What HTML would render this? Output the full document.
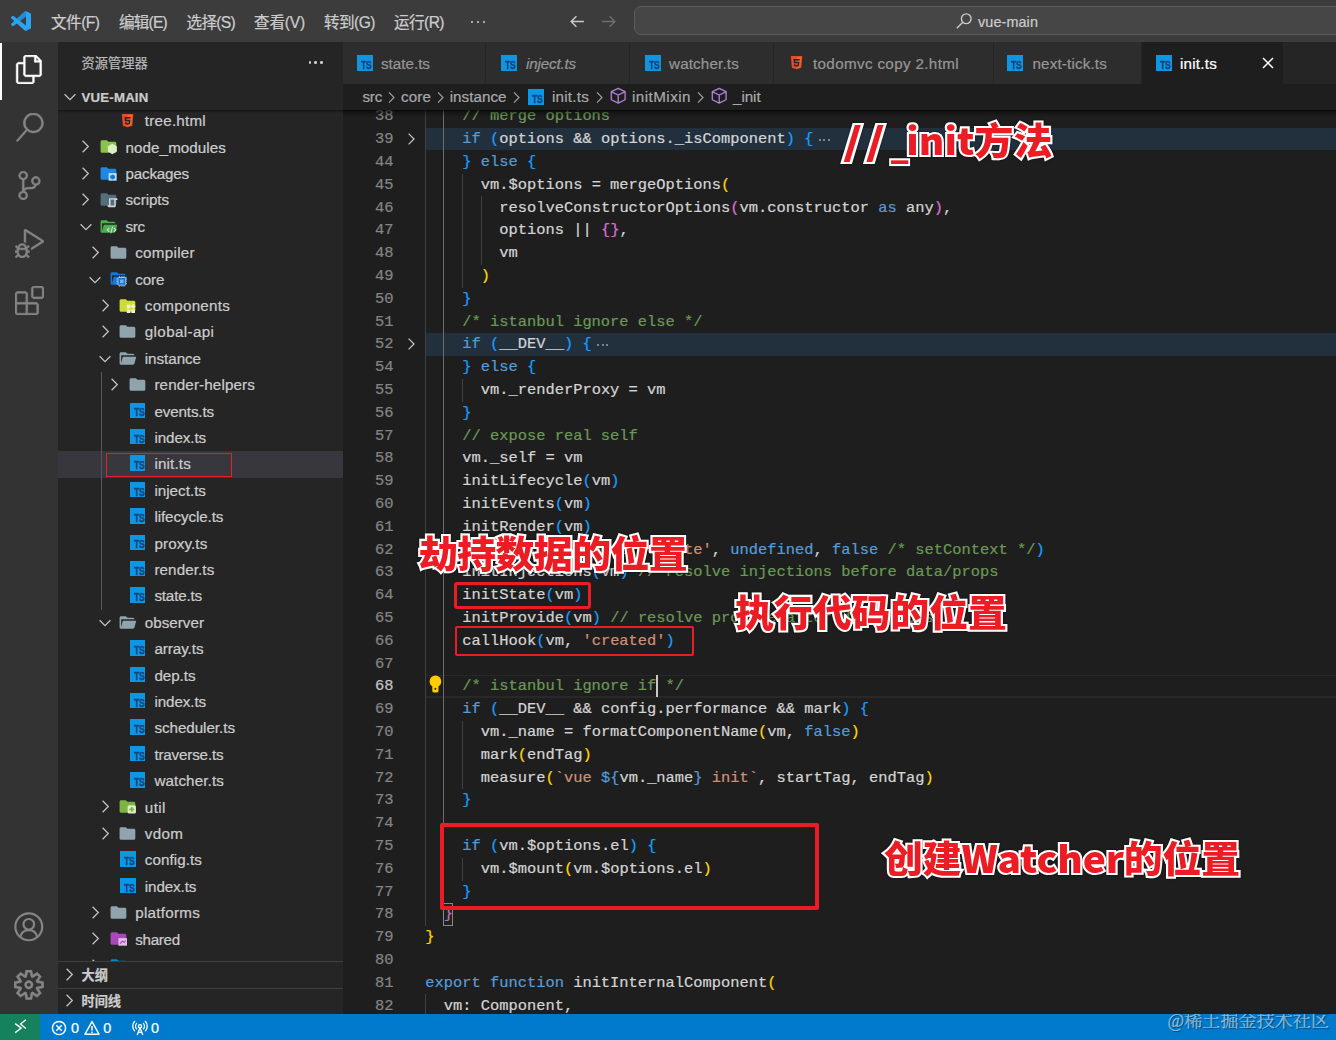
<!DOCTYPE html>
<html lang="zh-CN"><head><meta charset="utf-8"><title>init.ts - vue-main</title>
<style>
*{box-sizing:border-box;margin:0;padding:0}
html,body{width:1336px;height:1040px;overflow:hidden;background:#1e1e1e}
body{position:relative;font-family:"Liberation Sans","Noto Sans CJK SC",sans-serif;color:#cccccc;-webkit-font-smoothing:antialiased}
.abs{position:absolute}
#title{left:0;top:0;width:1336px;height:42px;background:#3c3c3c}
#act{left:0;top:42px;width:58px;height:971.8px;background:#333333}
#side{left:58px;top:42px;width:285px;height:971.8px;background:#252526;overflow:hidden}
#tabs{left:343px;top:42px;width:993px;height:42px;background:#252526}
#crumbs{left:343px;top:84px;width:993px;height:26px;background:#1e1e1e}
#editor{left:343px;top:110px;width:993px;height:903.8px;background:#1e1e1e;overflow:hidden}
#status{left:0;top:1013.8px;width:1336px;height:26.2px;background:#007acc}
.t{position:absolute;white-space:pre;line-height:1;-webkit-text-stroke:0.22px}
.menu{color:#cccccc;font-size:15.6px}
</style></head>
<body>
<!-- part_frame -->
<div id="title" class="abs"></div>
<svg class="abs" style="left:10.5px;top:11px;" width="20" height="20" viewBox="0 0 24 24"><path fill="#2aa4f0" d="M23.15 2.587L18.21.21a1.494 1.494 0 0 0-1.705.29l-9.46 8.63-4.12-3.128a.999.999 0 0 0-1.276.057L.327 7.261A1 1 0 0 0 .326 8.74L3.899 12 .326 15.26a1 1 0 0 0 .001 1.479L1.65 17.94a.999.999 0 0 0 1.276.057l4.12-3.128 9.46 8.63a1.492 1.492 0 0 0 1.704.29l4.942-2.377A1.5 1.5 0 0 0 24 20.06V3.939a1.5 1.5 0 0 0-.85-1.352zm-5.146 14.861L10.826 12l7.178-5.448v10.896z"/><path fill="#1579c4" d="M18.004 6.552V.3l-1.5.2-9.46 8.63L10.826 12z" opacity=".55"/></svg>
<span class="t" style="left:51px;top:12.59px;line-height:20px;font-size:15.6px;color:#cccccc;letter-spacing:-0.52px;">文件(F)</span>
<span class="t" style="left:119px;top:12.59px;line-height:20px;font-size:15.6px;color:#cccccc;letter-spacing:-0.8px;">编辑(E)</span>
<span class="t" style="left:186.5px;top:12.59px;line-height:20px;font-size:15.6px;color:#cccccc;letter-spacing:-0.7px;">选择(S)</span>
<span class="t" style="left:254px;top:12.59px;line-height:20px;font-size:15.6px;color:#cccccc;letter-spacing:-0.2px;">查看(V)</span>
<span class="t" style="left:324px;top:12.59px;line-height:20px;font-size:15.6px;color:#cccccc;letter-spacing:-0.54px;">转到(G)</span>
<span class="t" style="left:394px;top:12.59px;line-height:20px;font-size:15.6px;color:#cccccc;letter-spacing:-0.57px;">运行(R)</span>
<div class="abs" style="left:470.5px;top:20.5px;width:2px;height:2px;background:#cccccc;border-radius:1px"></div>
<div class="abs" style="left:476.5px;top:20.5px;width:2px;height:2px;background:#cccccc;border-radius:1px"></div>
<div class="abs" style="left:482.5px;top:20.5px;width:2px;height:2px;background:#cccccc;border-radius:1px"></div>
<svg class="abs" style="left:569px;top:13px;" width="17" height="17" viewBox="0 0 16 16"><path d="M14 8H2.5M7 3L2 8l5 5" fill="none" stroke="#cccccc" stroke-width="1.3"/></svg>
<svg class="abs" style="left:600px;top:13px;" width="17" height="17" viewBox="0 0 16 16"><path d="M2 8h11.5M9 3l5 5-5 5" fill="none" stroke="#6e6e6e" stroke-width="1.3"/></svg>
<div class="abs" style="left:634px;top:6px;width:720px;height:29px;background:#464647;border:1px solid #5c5c5c;border-radius:7px"></div>
<svg class="abs" style="left:955px;top:12px;" width="18" height="18" viewBox="0 0 16 16"><circle cx="10" cy="6" r="4.3" fill="none" stroke="#cccccc" stroke-width="1.2"/><path d="M6.9 9.1L1.6 14.4" stroke="#cccccc" stroke-width="1.2"/></svg>
<span class="t" style="left:978px;top:13.31px;line-height:19px;font-size:14.4px;color:#cccccc;letter-spacing:0.1px;">vue-main</span>
<div id="act" class="abs"></div>
<div class="abs" style="left:0px;top:42.5px;width:2.3px;height:57px;background:#ffffff;"></div>
<svg class="abs" style="left:14.5px;top:55px;" width="29" height="29" viewBox="0 0 24 24"><path fill="#ffffff" stroke="#ffffff" stroke-width=".4" d="M17.5 0h-9L7 1.5V6H2.5L1 7.5v15.07L2.5 24h12.07L16 22.57V18h4.7l1.3-1.43V4.5L17.5 0zm0 2.12l2.38 2.38H17.5V2.12zm-3 20.38h-12v-15H7v9.07L8.5 18h6v4.5zm6-6h-12v-15H16V6h4.5v10.5z"/></svg>
<svg class="abs" style="left:14.5px;top:113px;" width="29" height="29" viewBox="0 0 24 24"><path fill="#858585" stroke="#858585" stroke-width=".45" d="M15.25 0a8.25 8.25 0 0 0-6.18 13.72L1 22.88l1.12 1 8.05-9.12A8.251 8.251 0 1 0 15.25.01V0zm0 15a6.75 6.75 0 1 1 0-13.5 6.75 6.75 0 0 1 0 13.5z"/></svg>
<svg class="abs" style="left:14.5px;top:171px;" width="29" height="29" viewBox="0 0 24 24"><path fill="#858585" stroke="#858585" stroke-width=".45" d="M21.007 8.222A3.738 3.738 0 0 0 15.045 5.2a3.737 3.737 0 0 0 1.156 6.583 2.988 2.988 0 0 1-2.668 1.67h-2.99a4.456 4.456 0 0 0-2.989 1.165V7.4a3.737 3.737 0 1 0-1.494 0v9.117a3.776 3.776 0 1 0 1.816.099 2.99 2.99 0 0 1 2.668-1.667h2.99a4.484 4.484 0 0 0 4.223-3.039 3.736 3.736 0 0 0 3.25-3.687zM4.565 3.738a2.242 2.242 0 1 1 4.484 0 2.242 2.242 0 0 1-4.484 0zm4.484 16.441a2.242 2.242 0 1 1-4.484 0 2.242 2.242 0 0 1 4.484 0zm8.221-9.715a2.242 2.242 0 1 1 0-4.485 2.242 2.242 0 0 1 0 4.485z"/></svg>
<svg class="abs" style="left:14.5px;top:228.5px;" width="29" height="29" viewBox="0 0 24 24"><path fill="#858585" stroke="#858585" stroke-width=".45" d="M10.94 13.5l-1.32 1.32a3.73 3.73 0 0 0-7.24 0L1.06 13.5 0 14.56l1.72 1.72-.22.22V18H0v1.5h1.5v.08c.077.489.214.966.41 1.42L0 22.94 1.06 24l1.65-1.65A4.308 4.308 0 0 0 6 24a4.31 4.31 0 0 0 3.29-1.65L10.94 24 12 22.94 10.09 21c.198-.464.336-.951.41-1.45v-.1H12V18h-1.5v-1.5l-.22-.22L12 14.56l-1.06-1.06zM6 13.5a2.25 2.25 0 0 1 2.25 2.25h-4.5A2.25 2.25 0 0 1 6 13.5zm3 6a3.33 3.33 0 0 1-3 3 3.33 3.33 0 0 1-3-3v-2.25h6v2.25zm14.76-9.9v1.26L13.5 17.37V15.6l8.5-5.37L9 2v9.46a5.07 5.07 0 0 0-1.5-.72V.63L8.64 0l15.12 9.6z"/></svg>
<svg class="abs" style="left:14.5px;top:286px;" width="29" height="29" viewBox="0 0 24 24"><path fill="#858585" stroke="#858585" stroke-width=".45" d="M13.5 1.5L15 0h7.5L24 1.5V9l-1.5 1.5H15L13.5 9V1.5zm1.5 0V9h7.5V1.5H15zM0 15V6l1.5-1.5H9L10.5 6v7.5H18l1.5 1.5v7.5L18 24H1.5L0 22.5V15zm9-1.5V6H1.5v7.5H9zM9 15H1.5v7.5H9V15zm1.5 7.5H18V15h-7.5v7.5z"/></svg>
<svg class="abs" style="left:14.2px;top:912px;" width="29.6" height="29.6" viewBox="0 0 24 24"><circle cx="12" cy="12" r="10.9" fill="none" stroke="#858585" stroke-width="1.75"/><circle cx="12" cy="10" r="4.3" fill="none" stroke="#858585" stroke-width="1.75"/><path d="M5.2 20.2c.7-3.5 3.400-5.500 6.800-5.500s6.100 2 6.800 5.500" fill="none" stroke="#858585" stroke-width="1.75"/></svg>
<svg class="abs" style="left:14.2px;top:970px;" width="29.6" height="29.6" viewBox="0 0 24 24"><path fill="#858585" stroke="#858585" stroke-width=".45" d="M19.85 8.75l4.15.83v4.84l-4.15.83 2.35 3.52-3.43 3.43-3.52-2.35-.83 4.15H9.58l-.83-4.15-3.52 2.35-3.43-3.43 2.35-3.52L0 14.42V9.58l4.15-.83L1.8 5.23 5.23 1.8l3.52 2.35L9.58 0h4.84l.83 4.15 3.52-2.35 3.43 3.43-2.35 3.52zm-1.57 5.07l4-.81v-2l-4-.81-.54-1.3 2.29-3.43-1.43-1.43-3.43 2.29-1.3-.54-.81-4h-2l-.81 4-1.3.54-3.43-2.29-1.43 1.43L6.38 8.9l-.54 1.3-4 .81v2l4 .81.54 1.3-2.29 3.43 1.43 1.43 3.43-2.29 1.3.54.81 4h2l.81-4 1.3-.54 3.43 2.29 1.43-1.43-2.29-3.43.54-1.3zm-8.186-4.672A3.43 3.43 0 0 1 12 8.57 3.44 3.44 0 0 1 15.43 12a3.43 3.43 0 1 1-5.336-2.852zm.956 4.274c.281.188.612.288.95.288A1.7 1.7 0 0 0 13.71 12a1.71 1.71 0 1 0-2.66 1.422z"/></svg>
<div id="status" class="abs"></div>
<div class="abs" style="left:0px;top:1013.8px;width:40.4px;height:26.2px;background:#16825d;"></div>
<svg class="abs" style="left:10px;top:1016px;" width="20" height="20" viewBox="0 0 20 20"><path d="M5.2 7.6l6 4.5-6 4.5M15.8 3.8l-5.2 4.3 5.2 4.3" fill="none" stroke="#ffffff" stroke-width="1.35"/></svg>
<svg class="abs" style="left:51px;top:1019.5px;" width="16" height="16" viewBox="0 0 16 16"><circle cx="8" cy="8" r="6.6" fill="none" stroke="#fff" stroke-width="1.45"/><path d="M5.3 5.3l5.4 5.4M10.7 5.3l-5.4 5.4" stroke="#fff" stroke-width="1.45"/></svg>
<span class="t" style="left:71px;top:1018.51px;line-height:19px;font-size:14.4px;color:#ffffff;letter-spacing:-0.02px;">0</span>
<svg class="abs" style="left:84px;top:1019.5px;" width="16" height="16" viewBox="0 0 16 16"><path d="M8 1.6L15 14.2H1z" fill="none" stroke="#fff" stroke-width="1.45" stroke-linejoin="round"/><path d="M8 6v4.6M8 11.6v1.3" stroke="#fff" stroke-width="1.45"/></svg>
<span class="t" style="left:103.3px;top:1018.51px;line-height:19px;font-size:14.4px;color:#ffffff;letter-spacing:0.18px;">0</span>
<svg class="abs" style="left:131.5px;top:1019.5px;" width="16" height="16" viewBox="0 0 16 16"><circle cx="8" cy="6.2" r="1.6" fill="none" stroke="#fff" stroke-width="1.35"/><path d="M8 7.8L5.2 15M8 7.8L10.8 15M6.2 12.3h3.6" fill="none" stroke="#fff" stroke-width="1.35"/><path d="M4.9 9.3a4.4 4.4 0 0 1 0-6.2M11.1 9.3a4.4 4.4 0 0 0 0-6.2M2.9 11.3a7.2 7.2 0 0 1 0-10.2M13.1 11.3a7.2 7.2 0 0 0 0-10.2" fill="none" stroke="#fff" stroke-width="1.35"/></svg>
<span class="t" style="left:151px;top:1018.51px;line-height:19px;font-size:14.4px;color:#ffffff;letter-spacing:-0.02px;">0</span>
<span class="t" style="left:1167.6px;top:1008.2px;line-height:26px;font-size:18.1px;font-family:&quot;Liberation Serif&quot;,&quot;Noto Serif CJK SC&quot;,serif;color:rgba(255,255,255,.5);text-shadow:1px 1px 1px rgba(0,0,0,.5);letter-spacing:0">@稀土掘金技术社区</span>
<!-- part_side -->
<div id="side" class="abs"></div>
<div class="abs" style="left:58px;top:451.2px;width:285px;height:26.4px;background:#37373d;"></div>
<div class="abs" style="left:101px;top:372px;width:1px;height:237.6px;background:#585858;"></div>
<span class="t" style="left:144.8px;top:111.23px;line-height:20px;font-size:15.2px;color:#cccccc;letter-spacing:0.23px;">tree.html</span>
<svg class="abs" style="left:121.1px;top:113.1px;" width="13.2" height="15.2" viewBox="0 0 16 16"><path d="M1 0h14l-1.3 14.4L8 16l-5.7-1.6z" fill="#e44d26"/><path d="M8 1.2v13.6l4.6-1.3L13.7 1.2z" fill="#f16529"/><path d="M4.3 3.6h7.5l-.2 1.9H6.3l.1 1.6h5l-.5 5L8 13l-2.9-.9-.2-2.2h1.8l.1 1 1.2.3 1.2-.3.2-2H4.7z" fill="#252526"/></svg>
<span class="t" style="left:125.6px;top:137.63px;line-height:20px;font-size:15.2px;color:#cccccc;letter-spacing:0.06px;">node_modules</span>
<svg class="abs" style="left:79.3px;top:139.3px;" width="14" height="15" viewBox="0 0 14 15"><path d="M3.6 1.8l5.7 5.7-5.7 5.7" fill="none" stroke="#c5c5c5" stroke-width="1.25"/></svg>
<svg class="abs" style="left:99px;top:137.35px;" width="18.9" height="18.9" viewBox="0 0 24 24"><path fill="#8bc34a" d="M10 4H4c-1.11 0-2 .89-2 2v12a2 2 0 0 0 2 2h16a2 2 0 0 0 2-2V8c0-1.11-.9-2-2-2h-8l-2-2z"/><path d="M17 8.6l5.7 3.3v6.6L17 21.8l-5.700-3.3v-6.600z" fill="#dcedc8"/></svg>
<span class="t" style="left:125.6px;top:164.03px;line-height:20px;font-size:15.2px;color:#cccccc;letter-spacing:-0.2px;">packages</span>
<svg class="abs" style="left:79.3px;top:165.7px;" width="14" height="15" viewBox="0 0 14 15"><path d="M3.6 1.8l5.7 5.7-5.7 5.7" fill="none" stroke="#c5c5c5" stroke-width="1.25"/></svg>
<svg class="abs" style="left:99px;top:163.75px;" width="18.9" height="18.9" viewBox="0 0 24 24"><path fill="#1e88e5" d="M10 4H4c-1.11 0-2 .89-2 2v12a2 2 0 0 0 2 2h16a2 2 0 0 0 2-2V8c0-1.11-.9-2-2-2h-8l-2-2z"/><path d="M12.2 11.6h10.2v9.6H12.2z" fill="#bbdefb"/><path d="M17.3 13.2l3 1.6v3.2l-3 1.6-3-1.6v-3.2z" fill="#1976d2"/></svg>
<span class="t" style="left:125.6px;top:190.43px;line-height:20px;font-size:15.2px;color:#cccccc;letter-spacing:-0.07px;">scripts</span>
<svg class="abs" style="left:79.3px;top:192.1px;" width="14" height="15" viewBox="0 0 14 15"><path d="M3.6 1.8l5.7 5.7-5.7 5.7" fill="none" stroke="#c5c5c5" stroke-width="1.25"/></svg>
<svg class="abs" style="left:99px;top:190.15px;" width="18.9" height="18.9" viewBox="0 0 24 24"><path fill="#546e7a" d="M10 4H4c-1.11 0-2 .89-2 2v12a2 2 0 0 0 2 2h16a2 2 0 0 0 2-2V8c0-1.11-.9-2-2-2h-8l-2-2z"/><path d="M13.4 10.4h8.8c.9 0 1.2.7 1.2 1.4v.9h-2.2v7.6c0 1-.8 1.6-1.7 1.6h-7.1c-.9 0-1.5-.7-1.5-1.5v-1h1.8v-7.1c0-1 .2-1.9.7-1.9z" fill="#cfd8dc"/><path d="M14.6 12.1h4.8v7.6h-4.8z" fill="#546e7a"/></svg>
<span class="t" style="left:125.6px;top:216.83px;line-height:20px;font-size:15.2px;color:#cccccc;letter-spacing:-0.42px;">src</span>
<svg class="abs" style="left:78.8px;top:219.8px;" width="14" height="14" viewBox="0 0 14 14"><path d="M1.6 4.3L7 9.7l5.4-5.4" fill="none" stroke="#c5c5c5" stroke-width="1.25"/></svg>
<svg class="abs" style="left:99px;top:216.55px;" width="18.9" height="18.9" viewBox="0 0 24 24"><path fill="#4caf50" d="M19 20H4a2 2 0 0 1-2-2V6c0-1.11.89-2 2-2h6l2 2h7a2 2 0 0 1 2 2H4v10l2.14-8h17.07l-2.28 8.5c-.23.87-1.01 1.5-1.93 1.5z"/><path d="M12.7 13.2l-3.2 3.1 3.2 3.1 1-1-2.1-2.1 2.1-2.1zM19.4 13.2l-1 1 2.1 2.1-2.1 2.1 1 1 3.2-3.1zM16.6 12.2l-2.3 8.4h1.4l2.3-8.4z" fill="#c8e6c9"/></svg>
<span class="t" style="left:135.2px;top:243.23px;line-height:20px;font-size:15.2px;color:#cccccc;letter-spacing:0.3px;">compiler</span>
<svg class="abs" style="left:88.9px;top:244.9px;" width="14" height="15" viewBox="0 0 14 15"><path d="M3.6 1.8l5.7 5.7-5.7 5.7" fill="none" stroke="#c5c5c5" stroke-width="1.25"/></svg>
<svg class="abs" style="left:108.6px;top:242.95px;" width="18.9" height="18.9" viewBox="0 0 24 24"><path fill="#90a4ae" d="M10 4H4c-1.11 0-2 .89-2 2v12a2 2 0 0 0 2 2h16a2 2 0 0 0 2-2V8c0-1.11-.9-2-2-2h-8l-2-2z"/></svg>
<span class="t" style="left:135.2px;top:269.63px;line-height:20px;font-size:15.2px;color:#cccccc;letter-spacing:-0.06px;">core</span>
<svg class="abs" style="left:88.4px;top:272.6px;" width="14" height="14" viewBox="0 0 14 14"><path d="M1.6 4.3L7 9.7l5.4-5.4" fill="none" stroke="#c5c5c5" stroke-width="1.25"/></svg>
<svg class="abs" style="left:108.6px;top:269.35px;" width="18.9" height="18.9" viewBox="0 0 24 24"><path fill="#1976d2" d="M19 20H4a2 2 0 0 1-2-2V6c0-1.11.89-2 2-2h6l2 2h7a2 2 0 0 1 2 2H4v10l2.14-8h17.07l-2.28 8.5c-.23.87-1.01 1.5-1.93 1.5z"/><rect x="11.4" y="10.8" width="9.8" height="9.8" rx="1" fill="#1e6fc4" stroke="#a9d2f7" stroke-width="1.1"/><rect x="14" y="13.4" width="4.6" height="4.6" fill="#6db6f5"/><path d="M9.400 12.800h1.400M9.400 15.700h1.400M9.400 18.600h1.400M21.800 12.800h1.400M21.800 15.700h1.400M21.800 18.600h1.400M13.400 8.800v1.400M16.300 8.800v1.400M19.200 8.800v1.400M13.400 21.200v1.400M16.300 21.200v1.400M19.200 21.200v1.400" stroke="#a9d2f7" stroke-width="1"/></svg>
<span class="t" style="left:144.8px;top:296.03px;line-height:20px;font-size:15.2px;color:#cccccc;letter-spacing:0.25px;">components</span>
<svg class="abs" style="left:98.5px;top:297.7px;" width="14" height="15" viewBox="0 0 14 15"><path d="M3.6 1.8l5.7 5.7-5.7 5.7" fill="none" stroke="#c5c5c5" stroke-width="1.25"/></svg>
<svg class="abs" style="left:118.2px;top:295.75px;" width="18.9" height="18.9" viewBox="0 0 24 24"><path fill="#cddc39" d="M10 4H4c-1.11 0-2 .89-2 2v12a2 2 0 0 0 2 2h16a2 2 0 0 0 2-2V8c0-1.11-.9-2-2-2h-8l-2-2z"/><path d="M11.2 11.2h4.6v4.6h-4.6zM11.2 17h4.6v4.6h-4.6zM17 17h4.6v4.6H17zM19.3 9.9l3.2 3.2-3.2 3.2-3.2-3.2z" fill="#f0f4c3"/></svg>
<span class="t" style="left:144.8px;top:322.43px;line-height:20px;font-size:15.2px;color:#cccccc;letter-spacing:0.37px;">global-api</span>
<svg class="abs" style="left:98.5px;top:324.1px;" width="14" height="15" viewBox="0 0 14 15"><path d="M3.6 1.8l5.7 5.7-5.7 5.7" fill="none" stroke="#c5c5c5" stroke-width="1.25"/></svg>
<svg class="abs" style="left:118.2px;top:322.15px;" width="18.9" height="18.9" viewBox="0 0 24 24"><path fill="#90a4ae" d="M10 4H4c-1.11 0-2 .89-2 2v12a2 2 0 0 0 2 2h16a2 2 0 0 0 2-2V8c0-1.11-.9-2-2-2h-8l-2-2z"/></svg>
<span class="t" style="left:144.8px;top:348.83px;line-height:20px;font-size:15.2px;color:#cccccc;letter-spacing:-0.05px;">instance</span>
<svg class="abs" style="left:98px;top:351.8px;" width="14" height="14" viewBox="0 0 14 14"><path d="M1.6 4.3L7 9.7l5.4-5.4" fill="none" stroke="#c5c5c5" stroke-width="1.25"/></svg>
<svg class="abs" style="left:118.2px;top:348.55px;" width="18.9" height="18.9" viewBox="0 0 24 24"><path fill="#90a4ae" d="M19 20H4a2 2 0 0 1-2-2V6c0-1.11.89-2 2-2h6l2 2h7a2 2 0 0 1 2 2H4v10l2.14-8h17.07l-2.28 8.5c-.23.87-1.01 1.5-1.93 1.5z"/></svg>
<span class="t" style="left:154.4px;top:375.23px;line-height:20px;font-size:15.2px;color:#cccccc;letter-spacing:0.13px;">render-helpers</span>
<svg class="abs" style="left:108.1px;top:376.9px;" width="14" height="15" viewBox="0 0 14 15"><path d="M3.6 1.8l5.7 5.7-5.7 5.7" fill="none" stroke="#c5c5c5" stroke-width="1.25"/></svg>
<svg class="abs" style="left:127.8px;top:374.95px;" width="18.9" height="18.9" viewBox="0 0 24 24"><path fill="#90a4ae" d="M10 4H4c-1.11 0-2 .89-2 2v12a2 2 0 0 0 2 2h16a2 2 0 0 0 2-2V8c0-1.11-.9-2-2-2h-8l-2-2z"/></svg>
<span class="t" style="left:154.4px;top:401.63px;line-height:20px;font-size:15.2px;color:#cccccc;letter-spacing:-0.13px;">events.ts</span>
<div class="abs" style="left:129.8px;top:402.5px;width:15.6px;height:15.6px;background:#0c96e4"></div><span class="t" style="left:131.8px;top:408.4px;font-size:10.2px;line-height:10px;font-weight:700;color:#15467f;letter-spacing:-0.2px;transform-origin:100% 100%;transform:scaleX(.84);-webkit-text-stroke:.4px">TS</span>
<span class="t" style="left:154.4px;top:428.03px;line-height:20px;font-size:15.2px;color:#cccccc;letter-spacing:-0.09px;">index.ts</span>
<div class="abs" style="left:129.8px;top:428.9px;width:15.6px;height:15.6px;background:#0c96e4"></div><span class="t" style="left:131.8px;top:434.8px;font-size:10.2px;line-height:10px;font-weight:700;color:#15467f;letter-spacing:-0.2px;transform-origin:100% 100%;transform:scaleX(.84);-webkit-text-stroke:.4px">TS</span>
<span class="t" style="left:154.4px;top:454.43px;line-height:20px;font-size:15.2px;color:#cccccc;letter-spacing:0.16px;">init.ts</span>
<div class="abs" style="left:129.8px;top:455.3px;width:15.6px;height:15.6px;background:#0c96e4"></div><span class="t" style="left:131.8px;top:461.2px;font-size:10.2px;line-height:10px;font-weight:700;color:#15467f;letter-spacing:-0.2px;transform-origin:100% 100%;transform:scaleX(.84);-webkit-text-stroke:.4px">TS</span>
<span class="t" style="left:154.4px;top:480.83px;line-height:20px;font-size:15.2px;color:#cccccc;letter-spacing:0.01px;">inject.ts</span>
<div class="abs" style="left:129.8px;top:481.7px;width:15.6px;height:15.6px;background:#0c96e4"></div><span class="t" style="left:131.8px;top:487.6px;font-size:10.2px;line-height:10px;font-weight:700;color:#15467f;letter-spacing:-0.2px;transform-origin:100% 100%;transform:scaleX(.84);-webkit-text-stroke:.4px">TS</span>
<span class="t" style="left:154.4px;top:507.23px;line-height:20px;font-size:15.2px;color:#cccccc;letter-spacing:-0.09px;">lifecycle.ts</span>
<div class="abs" style="left:129.8px;top:508.1px;width:15.6px;height:15.6px;background:#0c96e4"></div><span class="t" style="left:131.8px;top:514px;font-size:10.2px;line-height:10px;font-weight:700;color:#15467f;letter-spacing:-0.2px;transform-origin:100% 100%;transform:scaleX(.84);-webkit-text-stroke:.4px">TS</span>
<span class="t" style="left:154.4px;top:533.63px;line-height:20px;font-size:15.2px;color:#cccccc;letter-spacing:0.12px;">proxy.ts</span>
<div class="abs" style="left:129.8px;top:534.5px;width:15.6px;height:15.6px;background:#0c96e4"></div><span class="t" style="left:131.8px;top:540.4px;font-size:10.2px;line-height:10px;font-weight:700;color:#15467f;letter-spacing:-0.2px;transform-origin:100% 100%;transform:scaleX(.84);-webkit-text-stroke:.4px">TS</span>
<span class="t" style="left:154.4px;top:560.03px;line-height:20px;font-size:15.2px;color:#cccccc;letter-spacing:0.1px;">render.ts</span>
<div class="abs" style="left:129.8px;top:560.9px;width:15.6px;height:15.6px;background:#0c96e4"></div><span class="t" style="left:131.8px;top:566.8px;font-size:10.2px;line-height:10px;font-weight:700;color:#15467f;letter-spacing:-0.2px;transform-origin:100% 100%;transform:scaleX(.84);-webkit-text-stroke:.4px">TS</span>
<span class="t" style="left:154.4px;top:586.43px;line-height:20px;font-size:15.2px;color:#cccccc;letter-spacing:-0.17px;">state.ts</span>
<div class="abs" style="left:129.8px;top:587.3px;width:15.6px;height:15.6px;background:#0c96e4"></div><span class="t" style="left:131.8px;top:593.2px;font-size:10.2px;line-height:10px;font-weight:700;color:#15467f;letter-spacing:-0.2px;transform-origin:100% 100%;transform:scaleX(.84);-webkit-text-stroke:.4px">TS</span>
<span class="t" style="left:144.8px;top:612.83px;line-height:20px;font-size:15.2px;color:#cccccc;letter-spacing:0.01px;">observer</span>
<svg class="abs" style="left:98px;top:615.8px;" width="14" height="14" viewBox="0 0 14 14"><path d="M1.6 4.3L7 9.7l5.4-5.4" fill="none" stroke="#c5c5c5" stroke-width="1.25"/></svg>
<svg class="abs" style="left:118.2px;top:612.55px;" width="18.9" height="18.9" viewBox="0 0 24 24"><path fill="#90a4ae" d="M19 20H4a2 2 0 0 1-2-2V6c0-1.11.89-2 2-2h6l2 2h7a2 2 0 0 1 2 2H4v10l2.14-8h17.07l-2.28 8.5c-.23.87-1.01 1.5-1.93 1.5z"/></svg>
<span class="t" style="left:154.4px;top:639.23px;line-height:20px;font-size:15.2px;color:#cccccc;letter-spacing:-0.05px;">array.ts</span>
<div class="abs" style="left:129.8px;top:640.1px;width:15.6px;height:15.6px;background:#0c96e4"></div><span class="t" style="left:131.8px;top:646px;font-size:10.2px;line-height:10px;font-weight:700;color:#15467f;letter-spacing:-0.2px;transform-origin:100% 100%;transform:scaleX(.84);-webkit-text-stroke:.4px">TS</span>
<span class="t" style="left:154.4px;top:665.63px;line-height:20px;font-size:15.2px;color:#cccccc;letter-spacing:-0.05px;">dep.ts</span>
<div class="abs" style="left:129.8px;top:666.5px;width:15.6px;height:15.6px;background:#0c96e4"></div><span class="t" style="left:131.8px;top:672.4px;font-size:10.2px;line-height:10px;font-weight:700;color:#15467f;letter-spacing:-0.2px;transform-origin:100% 100%;transform:scaleX(.84);-webkit-text-stroke:.4px">TS</span>
<span class="t" style="left:154.4px;top:692.03px;line-height:20px;font-size:15.2px;color:#cccccc;letter-spacing:-0.09px;">index.ts</span>
<div class="abs" style="left:129.8px;top:692.9px;width:15.6px;height:15.6px;background:#0c96e4"></div><span class="t" style="left:131.8px;top:698.8px;font-size:10.2px;line-height:10px;font-weight:700;color:#15467f;letter-spacing:-0.2px;transform-origin:100% 100%;transform:scaleX(.84);-webkit-text-stroke:.4px">TS</span>
<span class="t" style="left:154.4px;top:718.43px;line-height:20px;font-size:15.2px;color:#cccccc;letter-spacing:-0.04px;">scheduler.ts</span>
<div class="abs" style="left:129.8px;top:719.3px;width:15.6px;height:15.6px;background:#0c96e4"></div><span class="t" style="left:131.8px;top:725.2px;font-size:10.2px;line-height:10px;font-weight:700;color:#15467f;letter-spacing:-0.2px;transform-origin:100% 100%;transform:scaleX(.84);-webkit-text-stroke:.4px">TS</span>
<span class="t" style="left:154.4px;top:744.83px;line-height:20px;font-size:15.2px;color:#cccccc;letter-spacing:-0.17px;">traverse.ts</span>
<div class="abs" style="left:129.8px;top:745.7px;width:15.6px;height:15.6px;background:#0c96e4"></div><span class="t" style="left:131.8px;top:751.6px;font-size:10.2px;line-height:10px;font-weight:700;color:#15467f;letter-spacing:-0.2px;transform-origin:100% 100%;transform:scaleX(.84);-webkit-text-stroke:.4px">TS</span>
<span class="t" style="left:154.4px;top:771.23px;line-height:20px;font-size:15.2px;color:#cccccc;letter-spacing:0.12px;">watcher.ts</span>
<div class="abs" style="left:129.8px;top:772.1px;width:15.6px;height:15.6px;background:#0c96e4"></div><span class="t" style="left:131.8px;top:778px;font-size:10.2px;line-height:10px;font-weight:700;color:#15467f;letter-spacing:-0.2px;transform-origin:100% 100%;transform:scaleX(.84);-webkit-text-stroke:.4px">TS</span>
<span class="t" style="left:144.8px;top:797.63px;line-height:20px;font-size:15.2px;color:#cccccc;letter-spacing:0.39px;">util</span>
<svg class="abs" style="left:98.5px;top:799.3px;" width="14" height="15" viewBox="0 0 14 15"><path d="M3.6 1.8l5.7 5.7-5.7 5.7" fill="none" stroke="#c5c5c5" stroke-width="1.25"/></svg>
<svg class="abs" style="left:118.2px;top:797.35px;" width="18.9" height="18.9" viewBox="0 0 24 24"><path fill="#7cb342" d="M10 4H4c-1.11 0-2 .89-2 2v12a2 2 0 0 0 2 2h16a2 2 0 0 0 2-2V8c0-1.11-.9-2-2-2h-8l-2-2z"/><rect x="12.2" y="10.4" width="10.6" height="10.6" rx="2" fill="#dcedc8"/><path d="M17.5 12.6v6.2M14.4 15.7h6.2" stroke="#7cb342" stroke-width="2"/></svg>
<span class="t" style="left:144.8px;top:824.03px;line-height:20px;font-size:15.2px;color:#cccccc;letter-spacing:0.36px;">vdom</span>
<svg class="abs" style="left:98.5px;top:825.7px;" width="14" height="15" viewBox="0 0 14 15"><path d="M3.6 1.8l5.7 5.7-5.7 5.7" fill="none" stroke="#c5c5c5" stroke-width="1.25"/></svg>
<svg class="abs" style="left:118.2px;top:823.75px;" width="18.9" height="18.9" viewBox="0 0 24 24"><path fill="#90a4ae" d="M10 4H4c-1.11 0-2 .89-2 2v12a2 2 0 0 0 2 2h16a2 2 0 0 0 2-2V8c0-1.11-.9-2-2-2h-8l-2-2z"/></svg>
<span class="t" style="left:144.8px;top:850.43px;line-height:20px;font-size:15.2px;color:#cccccc;letter-spacing:0.07px;">config.ts</span>
<div class="abs" style="left:120.2px;top:851.3px;width:15.6px;height:15.6px;background:#0c96e4"></div><span class="t" style="left:122.2px;top:857.2px;font-size:10.2px;line-height:10px;font-weight:700;color:#15467f;letter-spacing:-0.2px;transform-origin:100% 100%;transform:scaleX(.84);-webkit-text-stroke:.4px">TS</span>
<span class="t" style="left:144.8px;top:876.83px;line-height:20px;font-size:15.2px;color:#cccccc;letter-spacing:-0.11px;">index.ts</span>
<div class="abs" style="left:120.2px;top:877.7px;width:15.6px;height:15.6px;background:#0c96e4"></div><span class="t" style="left:122.2px;top:883.6px;font-size:10.2px;line-height:10px;font-weight:700;color:#15467f;letter-spacing:-0.2px;transform-origin:100% 100%;transform:scaleX(.84);-webkit-text-stroke:.4px">TS</span>
<span class="t" style="left:135.2px;top:903.23px;line-height:20px;font-size:15.2px;color:#cccccc;letter-spacing:0.26px;">platforms</span>
<svg class="abs" style="left:88.9px;top:904.9px;" width="14" height="15" viewBox="0 0 14 15"><path d="M3.6 1.8l5.7 5.7-5.7 5.7" fill="none" stroke="#c5c5c5" stroke-width="1.25"/></svg>
<svg class="abs" style="left:108.6px;top:902.95px;" width="18.9" height="18.9" viewBox="0 0 24 24"><path fill="#90a4ae" d="M10 4H4c-1.11 0-2 .89-2 2v12a2 2 0 0 0 2 2h16a2 2 0 0 0 2-2V8c0-1.11-.9-2-2-2h-8l-2-2z"/></svg>
<span class="t" style="left:135.2px;top:929.63px;line-height:20px;font-size:15.2px;color:#cccccc;letter-spacing:-0.28px;">shared</span>
<svg class="abs" style="left:88.9px;top:931.3px;" width="14" height="15" viewBox="0 0 14 15"><path d="M3.6 1.8l5.7 5.7-5.7 5.7" fill="none" stroke="#c5c5c5" stroke-width="1.25"/></svg>
<svg class="abs" style="left:108.6px;top:929.35px;" width="18.9" height="18.9" viewBox="0 0 24 24"><path fill="#ab47bc" d="M10 4H4c-1.11 0-2 .89-2 2v12a2 2 0 0 0 2 2h16a2 2 0 0 0 2-2V8c0-1.11-.9-2-2-2h-8l-2-2z"/><path d="M12 11.6h11v9.6H12z" fill="#e1bee7"/><path d="M14 18.6l3-3.2 2 1.8 2.2-2.4" fill="none" stroke="#ab47bc" stroke-width="1.4"/></svg>
<span class="t" style="left:135.2px;top:956.03px;line-height:20px;font-size:15.2px;color:#cccccc;">types</span>
<svg class="abs" style="left:88.9px;top:957.7px;" width="14" height="15" viewBox="0 0 14 15"><path d="M3.6 1.8l5.7 5.7-5.7 5.7" fill="none" stroke="#c5c5c5" stroke-width="1.25"/></svg>
<svg class="abs" style="left:108.6px;top:955.75px;" width="18.9" height="18.9" viewBox="0 0 24 24"><path fill="#0288d1" d="M10 4H4c-1.11 0-2 .89-2 2v12a2 2 0 0 0 2 2h16a2 2 0 0 0 2-2V8c0-1.11-.9-2-2-2h-8l-2-2z"/></svg>
<div class="abs" style="left:106px;top:453px;width:126px;height:24.4px;background:transparent;border:1.3px solid #e0232b"></div>
<div class="abs" style="left:58px;top:42px;width:285px;height:68px;background:#252526;"></div>
<div class="abs" style="left:58px;top:110px;width:285px;height:3px;background:linear-gradient(rgba(0,0,0,.45),rgba(0,0,0,0));"></div>
<span class="t" style="left:81.6px;top:54.53px;line-height:17px;font-size:13.2px;color:#bbbbbb;letter-spacing:0.03px;">资源管理器</span>
<div class="abs" style="left:308.6px;top:61px;width:2.5px;height:2.5px;background:#cccccc;border-radius:1.3px"></div>
<div class="abs" style="left:314.3px;top:61px;width:2.5px;height:2.5px;background:#cccccc;border-radius:1.3px"></div>
<div class="abs" style="left:320px;top:61px;width:2.5px;height:2.5px;background:#cccccc;border-radius:1.3px"></div>
<svg class="abs" style="left:62.5px;top:90px;" width="14" height="14" viewBox="0 0 14 14"><path d="M1.6 4.3L7 9.7l5.4-5.4" fill="none" stroke="#c5c5c5" stroke-width="1.25"/></svg>
<span class="t" style="left:81.6px;top:88.53px;line-height:17px;font-size:13.2px;color:#cccccc;font-weight:700;letter-spacing:0.21px;">VUE-MAIN</span>
<div class="abs" style="left:58px;top:961.6px;width:285px;height:52.2px;background:#252526;"></div>
<div class="abs" style="left:58px;top:961.2px;width:285px;height:1px;background:#3f3f41;"></div>
<div class="abs" style="left:58px;top:987.8px;width:285px;height:1px;background:#3f3f41;"></div>
<svg class="abs" style="left:63px;top:966.7px;" width="14" height="15" viewBox="0 0 14 15"><path d="M3.6 1.8l5.7 5.7-5.7 5.7" fill="none" stroke="#c5c5c5" stroke-width="1.25"/></svg>
<span class="t" style="left:81.6px;top:966.93px;line-height:17px;font-size:13.2px;color:#cccccc;font-weight:700;letter-spacing:0.01px;">大纲</span>
<svg class="abs" style="left:63px;top:993.2px;" width="14" height="15" viewBox="0 0 14 15"><path d="M3.6 1.8l5.7 5.7-5.7 5.7" fill="none" stroke="#c5c5c5" stroke-width="1.25"/></svg>
<span class="t" style="left:81.6px;top:993.43px;line-height:17px;font-size:13.2px;color:#cccccc;font-weight:700;letter-spacing:-0.05px;">时间线</span>
<!-- part_code -->
<div id="editor" class="abs"></div>
<div class="abs" style="left:424.6px;top:127.7px;width:912px;height:22.8px;background:#22303e;"></div>
<div class="abs" style="left:424.6px;top:332.9px;width:912px;height:22.8px;background:#22303e;"></div>
<div class="abs" style="left:424.6px;top:674.5px;width:912px;height:1.6px;background:#282828;"></div>
<div class="abs" style="left:424.6px;top:696.3px;width:912px;height:1.6px;background:#282828;"></div>
<div class="abs" style="left:425px;top:105px;width:1px;height:821px;background:#404040;"></div>
<div class="abs" style="left:425px;top:994px;width:1px;height:19.5px;background:#404040;"></div>
<div class="abs" style="left:443px;top:105px;width:1px;height:798px;background:#6c6c6c;"></div>
<div class="abs" style="left:462px;top:173.5px;width:1px;height:114px;background:#404040;"></div>
<div class="abs" style="left:462px;top:378.5px;width:1px;height:23px;background:#404040;"></div>
<div class="abs" style="left:462px;top:720.5px;width:1px;height:68.5px;background:#404040;"></div>
<div class="abs" style="left:462px;top:857.5px;width:1px;height:23px;background:#404040;"></div>
<div class="abs" style="left:481px;top:196px;width:1px;height:68.5px;background:#404040;"></div>
<span class="t" style="left:374.9px;top:106.49px;line-height:20px;font-size:15.41px;color:#858585;font-family:'Liberation Mono','DejaVu Sans Mono',monospace;">38</span>
<div class="t" style="left:462.2px;top:106.49px;line-height:20px;font-family:'Liberation Mono','DejaVu Sans Mono',monospace;font-size:15.41px;color:#d4d4d4"><span style="color:#6a9955">// merge options</span></div>
<span class="t" style="left:374.9px;top:129.29px;line-height:20px;font-size:15.41px;color:#858585;font-family:'Liberation Mono','DejaVu Sans Mono',monospace;">39</span>
<div class="t" style="left:462.2px;top:129.29px;line-height:20px;font-family:'Liberation Mono','DejaVu Sans Mono',monospace;font-size:15.41px;color:#d4d4d4"><span style="color:#569cd6">if</span> <span style="color:#179fff">(</span>options &amp;&amp; options._isComponent<span style="color:#179fff">)</span> <span style="color:#179fff">{</span></div>
<span class="t" style="left:374.9px;top:152.09px;line-height:20px;font-size:15.41px;color:#858585;font-family:'Liberation Mono','DejaVu Sans Mono',monospace;">44</span>
<div class="t" style="left:462.2px;top:152.09px;line-height:20px;font-family:'Liberation Mono','DejaVu Sans Mono',monospace;font-size:15.41px;color:#d4d4d4"><span style="color:#179fff">}</span> <span style="color:#569cd6">else</span> <span style="color:#179fff">{</span></div>
<span class="t" style="left:374.9px;top:174.89px;line-height:20px;font-size:15.41px;color:#858585;font-family:'Liberation Mono','DejaVu Sans Mono',monospace;">45</span>
<div class="t" style="left:480.7px;top:174.89px;line-height:20px;font-family:'Liberation Mono','DejaVu Sans Mono',monospace;font-size:15.41px;color:#d4d4d4">vm.$options = mergeOptions<span style="color:#ffd700">(</span></div>
<span class="t" style="left:374.9px;top:197.69px;line-height:20px;font-size:15.41px;color:#858585;font-family:'Liberation Mono','DejaVu Sans Mono',monospace;">46</span>
<div class="t" style="left:499.2px;top:197.69px;line-height:20px;font-family:'Liberation Mono','DejaVu Sans Mono',monospace;font-size:15.41px;color:#d4d4d4">resolveConstructorOptions<span style="color:#da70d6">(</span>vm.constructor <span style="color:#569cd6">as</span> any<span style="color:#da70d6">)</span>,</div>
<span class="t" style="left:374.9px;top:220.49px;line-height:20px;font-size:15.41px;color:#858585;font-family:'Liberation Mono','DejaVu Sans Mono',monospace;">47</span>
<div class="t" style="left:499.2px;top:220.49px;line-height:20px;font-family:'Liberation Mono','DejaVu Sans Mono',monospace;font-size:15.41px;color:#d4d4d4">options || <span style="color:#da70d6">{}</span>,</div>
<span class="t" style="left:374.9px;top:243.29px;line-height:20px;font-size:15.41px;color:#858585;font-family:'Liberation Mono','DejaVu Sans Mono',monospace;">48</span>
<div class="t" style="left:499.2px;top:243.29px;line-height:20px;font-family:'Liberation Mono','DejaVu Sans Mono',monospace;font-size:15.41px;color:#d4d4d4">vm</div>
<span class="t" style="left:374.9px;top:266.09px;line-height:20px;font-size:15.41px;color:#858585;font-family:'Liberation Mono','DejaVu Sans Mono',monospace;">49</span>
<div class="t" style="left:480.7px;top:266.09px;line-height:20px;font-family:'Liberation Mono','DejaVu Sans Mono',monospace;font-size:15.41px;color:#d4d4d4"><span style="color:#ffd700">)</span></div>
<span class="t" style="left:374.9px;top:288.89px;line-height:20px;font-size:15.41px;color:#858585;font-family:'Liberation Mono','DejaVu Sans Mono',monospace;">50</span>
<div class="t" style="left:462.2px;top:288.89px;line-height:20px;font-family:'Liberation Mono','DejaVu Sans Mono',monospace;font-size:15.41px;color:#d4d4d4"><span style="color:#179fff">}</span></div>
<span class="t" style="left:374.9px;top:311.69px;line-height:20px;font-size:15.41px;color:#858585;font-family:'Liberation Mono','DejaVu Sans Mono',monospace;">51</span>
<div class="t" style="left:462.2px;top:311.69px;line-height:20px;font-family:'Liberation Mono','DejaVu Sans Mono',monospace;font-size:15.41px;color:#d4d4d4"><span style="color:#6a9955">/* istanbul ignore else */</span></div>
<span class="t" style="left:374.9px;top:334.49px;line-height:20px;font-size:15.41px;color:#858585;font-family:'Liberation Mono','DejaVu Sans Mono',monospace;">52</span>
<div class="t" style="left:462.2px;top:334.49px;line-height:20px;font-family:'Liberation Mono','DejaVu Sans Mono',monospace;font-size:15.41px;color:#d4d4d4"><span style="color:#569cd6">if</span> <span style="color:#179fff">(</span>__DEV__<span style="color:#179fff">)</span> <span style="color:#179fff">{</span></div>
<span class="t" style="left:374.9px;top:357.29px;line-height:20px;font-size:15.41px;color:#858585;font-family:'Liberation Mono','DejaVu Sans Mono',monospace;">54</span>
<div class="t" style="left:462.2px;top:357.29px;line-height:20px;font-family:'Liberation Mono','DejaVu Sans Mono',monospace;font-size:15.41px;color:#d4d4d4"><span style="color:#179fff">}</span> <span style="color:#569cd6">else</span> <span style="color:#179fff">{</span></div>
<span class="t" style="left:374.9px;top:380.09px;line-height:20px;font-size:15.41px;color:#858585;font-family:'Liberation Mono','DejaVu Sans Mono',monospace;">55</span>
<div class="t" style="left:480.7px;top:380.09px;line-height:20px;font-family:'Liberation Mono','DejaVu Sans Mono',monospace;font-size:15.41px;color:#d4d4d4">vm._renderProxy = vm</div>
<span class="t" style="left:374.9px;top:402.89px;line-height:20px;font-size:15.41px;color:#858585;font-family:'Liberation Mono','DejaVu Sans Mono',monospace;">56</span>
<div class="t" style="left:462.2px;top:402.89px;line-height:20px;font-family:'Liberation Mono','DejaVu Sans Mono',monospace;font-size:15.41px;color:#d4d4d4"><span style="color:#179fff">}</span></div>
<span class="t" style="left:374.9px;top:425.69px;line-height:20px;font-size:15.41px;color:#858585;font-family:'Liberation Mono','DejaVu Sans Mono',monospace;">57</span>
<div class="t" style="left:462.2px;top:425.69px;line-height:20px;font-family:'Liberation Mono','DejaVu Sans Mono',monospace;font-size:15.41px;color:#d4d4d4"><span style="color:#6a9955">// expose real self</span></div>
<span class="t" style="left:374.9px;top:448.49px;line-height:20px;font-size:15.41px;color:#858585;font-family:'Liberation Mono','DejaVu Sans Mono',monospace;">58</span>
<div class="t" style="left:462.2px;top:448.49px;line-height:20px;font-family:'Liberation Mono','DejaVu Sans Mono',monospace;font-size:15.41px;color:#d4d4d4">vm._self = vm</div>
<span class="t" style="left:374.9px;top:471.29px;line-height:20px;font-size:15.41px;color:#858585;font-family:'Liberation Mono','DejaVu Sans Mono',monospace;">59</span>
<div class="t" style="left:462.2px;top:471.29px;line-height:20px;font-family:'Liberation Mono','DejaVu Sans Mono',monospace;font-size:15.41px;color:#d4d4d4">initLifecycle<span style="color:#179fff">(</span>vm<span style="color:#179fff">)</span></div>
<span class="t" style="left:374.9px;top:494.09px;line-height:20px;font-size:15.41px;color:#858585;font-family:'Liberation Mono','DejaVu Sans Mono',monospace;">60</span>
<div class="t" style="left:462.2px;top:494.09px;line-height:20px;font-family:'Liberation Mono','DejaVu Sans Mono',monospace;font-size:15.41px;color:#d4d4d4">initEvents<span style="color:#179fff">(</span>vm<span style="color:#179fff">)</span></div>
<span class="t" style="left:374.9px;top:516.89px;line-height:20px;font-size:15.41px;color:#858585;font-family:'Liberation Mono','DejaVu Sans Mono',monospace;">61</span>
<div class="t" style="left:462.2px;top:516.89px;line-height:20px;font-family:'Liberation Mono','DejaVu Sans Mono',monospace;font-size:15.41px;color:#d4d4d4">initRender<span style="color:#179fff">(</span>vm<span style="color:#179fff">)</span></div>
<span class="t" style="left:374.9px;top:539.69px;line-height:20px;font-size:15.41px;color:#858585;font-family:'Liberation Mono','DejaVu Sans Mono',monospace;">62</span>
<div class="t" style="left:462.2px;top:539.69px;line-height:20px;font-family:'Liberation Mono','DejaVu Sans Mono',monospace;font-size:15.41px;color:#d4d4d4">callHook<span style="color:#179fff">(</span>vm, <span style="color:#ce9178">'beforeCreate'</span>, <span style="color:#569cd6">undefined</span>, <span style="color:#569cd6">false</span> <span style="color:#6a9955">/* setContext */</span><span style="color:#179fff">)</span></div>
<span class="t" style="left:374.9px;top:562.49px;line-height:20px;font-size:15.41px;color:#858585;font-family:'Liberation Mono','DejaVu Sans Mono',monospace;">63</span>
<div class="t" style="left:462.2px;top:562.49px;line-height:20px;font-family:'Liberation Mono','DejaVu Sans Mono',monospace;font-size:15.41px;color:#d4d4d4">initInjections<span style="color:#179fff">(</span>vm<span style="color:#179fff">)</span> <span style="color:#6a9955">// resolve injections before data/props</span></div>
<span class="t" style="left:374.9px;top:585.29px;line-height:20px;font-size:15.41px;color:#858585;font-family:'Liberation Mono','DejaVu Sans Mono',monospace;">64</span>
<div class="t" style="left:462.2px;top:585.29px;line-height:20px;font-family:'Liberation Mono','DejaVu Sans Mono',monospace;font-size:15.41px;color:#d4d4d4">initState<span style="color:#179fff">(</span>vm<span style="color:#179fff">)</span></div>
<span class="t" style="left:374.9px;top:608.09px;line-height:20px;font-size:15.41px;color:#858585;font-family:'Liberation Mono','DejaVu Sans Mono',monospace;">65</span>
<div class="t" style="left:462.2px;top:608.09px;line-height:20px;font-family:'Liberation Mono','DejaVu Sans Mono',monospace;font-size:15.41px;color:#d4d4d4">initProvide<span style="color:#179fff">(</span>vm<span style="color:#179fff">)</span> <span style="color:#6a9955">// resolve provide after data/props</span></div>
<span class="t" style="left:374.9px;top:630.89px;line-height:20px;font-size:15.41px;color:#858585;font-family:'Liberation Mono','DejaVu Sans Mono',monospace;">66</span>
<div class="t" style="left:462.2px;top:630.89px;line-height:20px;font-family:'Liberation Mono','DejaVu Sans Mono',monospace;font-size:15.41px;color:#d4d4d4">callHook<span style="color:#179fff">(</span>vm, <span style="color:#ce9178">'created'</span><span style="color:#179fff">)</span></div>
<span class="t" style="left:374.9px;top:653.69px;line-height:20px;font-size:15.41px;color:#858585;font-family:'Liberation Mono','DejaVu Sans Mono',monospace;">67</span>
<span class="t" style="left:374.9px;top:676.49px;line-height:20px;font-size:15.41px;color:#c6c6c6;font-family:'Liberation Mono','DejaVu Sans Mono',monospace;">68</span>
<div class="t" style="left:462.2px;top:676.49px;line-height:20px;font-family:'Liberation Mono','DejaVu Sans Mono',monospace;font-size:15.41px;color:#d4d4d4"><span style="color:#6a9955">/* istanbul ignore if */</span></div>
<span class="t" style="left:374.9px;top:699.29px;line-height:20px;font-size:15.41px;color:#858585;font-family:'Liberation Mono','DejaVu Sans Mono',monospace;">69</span>
<div class="t" style="left:462.2px;top:699.29px;line-height:20px;font-family:'Liberation Mono','DejaVu Sans Mono',monospace;font-size:15.41px;color:#d4d4d4"><span style="color:#569cd6">if</span> <span style="color:#179fff">(</span>__DEV__ &amp;&amp; config.performance &amp;&amp; mark<span style="color:#179fff">)</span> <span style="color:#179fff">{</span></div>
<span class="t" style="left:374.9px;top:722.09px;line-height:20px;font-size:15.41px;color:#858585;font-family:'Liberation Mono','DejaVu Sans Mono',monospace;">70</span>
<div class="t" style="left:480.7px;top:722.09px;line-height:20px;font-family:'Liberation Mono','DejaVu Sans Mono',monospace;font-size:15.41px;color:#d4d4d4">vm._name = formatComponentName<span style="color:#ffd700">(</span>vm, <span style="color:#569cd6">false</span><span style="color:#ffd700">)</span></div>
<span class="t" style="left:374.9px;top:744.89px;line-height:20px;font-size:15.41px;color:#858585;font-family:'Liberation Mono','DejaVu Sans Mono',monospace;">71</span>
<div class="t" style="left:480.7px;top:744.89px;line-height:20px;font-family:'Liberation Mono','DejaVu Sans Mono',monospace;font-size:15.41px;color:#d4d4d4">mark<span style="color:#ffd700">(</span>endTag<span style="color:#ffd700">)</span></div>
<span class="t" style="left:374.9px;top:767.69px;line-height:20px;font-size:15.41px;color:#858585;font-family:'Liberation Mono','DejaVu Sans Mono',monospace;">72</span>
<div class="t" style="left:480.7px;top:767.69px;line-height:20px;font-family:'Liberation Mono','DejaVu Sans Mono',monospace;font-size:15.41px;color:#d4d4d4">measure<span style="color:#ffd700">(</span><span style="color:#ce9178">`vue </span><span style="color:#569cd6">${</span>vm._name<span style="color:#569cd6">}</span><span style="color:#ce9178"> init`</span>, startTag, endTag<span style="color:#ffd700">)</span></div>
<span class="t" style="left:374.9px;top:790.49px;line-height:20px;font-size:15.41px;color:#858585;font-family:'Liberation Mono','DejaVu Sans Mono',monospace;">73</span>
<div class="t" style="left:462.2px;top:790.49px;line-height:20px;font-family:'Liberation Mono','DejaVu Sans Mono',monospace;font-size:15.41px;color:#d4d4d4"><span style="color:#179fff">}</span></div>
<span class="t" style="left:374.9px;top:813.29px;line-height:20px;font-size:15.41px;color:#858585;font-family:'Liberation Mono','DejaVu Sans Mono',monospace;">74</span>
<span class="t" style="left:374.9px;top:836.09px;line-height:20px;font-size:15.41px;color:#858585;font-family:'Liberation Mono','DejaVu Sans Mono',monospace;">75</span>
<div class="t" style="left:462.2px;top:836.09px;line-height:20px;font-family:'Liberation Mono','DejaVu Sans Mono',monospace;font-size:15.41px;color:#d4d4d4"><span style="color:#569cd6">if</span> <span style="color:#179fff">(</span>vm.$options.el<span style="color:#179fff">)</span> <span style="color:#179fff">{</span></div>
<span class="t" style="left:374.9px;top:858.89px;line-height:20px;font-size:15.41px;color:#858585;font-family:'Liberation Mono','DejaVu Sans Mono',monospace;">76</span>
<div class="t" style="left:480.7px;top:858.89px;line-height:20px;font-family:'Liberation Mono','DejaVu Sans Mono',monospace;font-size:15.41px;color:#d4d4d4">vm.$mount<span style="color:#ffd700">(</span>vm.$options.el<span style="color:#ffd700">)</span></div>
<span class="t" style="left:374.9px;top:881.69px;line-height:20px;font-size:15.41px;color:#858585;font-family:'Liberation Mono','DejaVu Sans Mono',monospace;">77</span>
<div class="t" style="left:462.2px;top:881.69px;line-height:20px;font-family:'Liberation Mono','DejaVu Sans Mono',monospace;font-size:15.41px;color:#d4d4d4"><span style="color:#179fff">}</span></div>
<span class="t" style="left:374.9px;top:904.49px;line-height:20px;font-size:15.41px;color:#858585;font-family:'Liberation Mono','DejaVu Sans Mono',monospace;">78</span>
<div class="t" style="left:443.7px;top:904.49px;line-height:20px;font-family:'Liberation Mono','DejaVu Sans Mono',monospace;font-size:15.41px;color:#d4d4d4"><span style="color:#da70d6">}</span></div>
<span class="t" style="left:374.9px;top:927.29px;line-height:20px;font-size:15.41px;color:#858585;font-family:'Liberation Mono','DejaVu Sans Mono',monospace;">79</span>
<div class="t" style="left:425.2px;top:927.29px;line-height:20px;font-family:'Liberation Mono','DejaVu Sans Mono',monospace;font-size:15.41px;color:#d4d4d4"><span style="color:#ffd700">}</span></div>
<span class="t" style="left:374.9px;top:950.09px;line-height:20px;font-size:15.41px;color:#858585;font-family:'Liberation Mono','DejaVu Sans Mono',monospace;">80</span>
<span class="t" style="left:374.9px;top:972.89px;line-height:20px;font-size:15.41px;color:#858585;font-family:'Liberation Mono','DejaVu Sans Mono',monospace;">81</span>
<div class="t" style="left:425.2px;top:972.89px;line-height:20px;font-family:'Liberation Mono','DejaVu Sans Mono',monospace;font-size:15.41px;color:#d4d4d4"><span style="color:#569cd6">export</span> <span style="color:#569cd6">function</span> initInternalComponent<span style="color:#ffd700">(</span></div>
<span class="t" style="left:374.9px;top:995.69px;line-height:20px;font-size:15.41px;color:#858585;font-family:'Liberation Mono','DejaVu Sans Mono',monospace;">82</span>
<div class="t" style="left:443.7px;top:995.69px;line-height:20px;font-family:'Liberation Mono','DejaVu Sans Mono',monospace;font-size:15.41px;color:#d4d4d4">vm: Component,</div>
<svg class="abs" style="left:405px;top:132.1px;" width="14" height="14" viewBox="0 0 14 14"><path d="M3.6 1.6l5.4 5.4-5.4 5.4" fill="none" stroke="#c5c5c5" stroke-width="1.25"/></svg>
<svg class="abs" style="left:405px;top:337.3px;" width="14" height="14" viewBox="0 0 14 14"><path d="M3.6 1.6l5.4 5.4-5.4 5.4" fill="none" stroke="#c5c5c5" stroke-width="1.25"/></svg>
<div class="abs" style="left:818.5px;top:138.8px;width:2px;height:2px;background:#9aa0a6;border-radius:1px"></div>
<div class="abs" style="left:823.2px;top:138.8px;width:2px;height:2px;background:#9aa0a6;border-radius:1px"></div>
<div class="abs" style="left:827.9px;top:138.8px;width:2px;height:2px;background:#9aa0a6;border-radius:1px"></div>
<div class="abs" style="left:597px;top:344px;width:2px;height:2px;background:#9aa0a6;border-radius:1px"></div>
<div class="abs" style="left:601.7px;top:344px;width:2px;height:2px;background:#9aa0a6;border-radius:1px"></div>
<div class="abs" style="left:606.4px;top:344px;width:2px;height:2px;background:#9aa0a6;border-radius:1px"></div>
<svg class="abs" style="left:427px;top:675px;" width="18" height="18" viewBox="0 0 18 18"><circle cx="8.45" cy="6.4" r="5.85" fill="#ffcc00"/><path d="M5.3 9.5h6.2v6.2c0 .9-.6 1.700-1.500 1.700H6.900c-.9 0-1.600-.8-1.600-1.700z" fill="#ffcc00"/><ellipse cx="8.4" cy="13.8" rx=".95" ry="1.100" fill="#3a1d00"/></svg>
<div class="abs" style="left:655.85px;top:675.4px;width:1.8px;height:21.8px;background:#c8c8c8;"></div>
<div class="abs" style="left:443px;top:903.2px;width:9.8px;height:23px;background:rgba(0,100,0,.1);border:1px solid #888888"></div>
<!-- part_tabs -->
<div id="tabs" class="abs"></div>
<div class="abs" style="left:343px;top:42px;width:143px;height:42px;background:#2d2d2d;border-right:1px solid #252526"></div>
<div class="abs" style="left:357px;top:54.8px;width:16px;height:16px;background:#0c96e4"></div><span class="t" style="left:359.4px;top:61.1px;font-size:10.2px;line-height:10px;font-weight:700;color:#15467f;letter-spacing:-0.2px;transform-origin:100% 100%;transform:scaleX(.84);-webkit-text-stroke:.4px">TS</span>
<span class="t" style="left:381px;top:53.53px;line-height:20px;font-size:15.2px;color:#969696;letter-spacing:0px;">state.ts</span>
<div class="abs" style="left:486px;top:42px;width:144px;height:42px;background:#2d2d2d;border-right:1px solid #252526"></div>
<div class="abs" style="left:501px;top:54.8px;width:16px;height:16px;background:#0c96e4"></div><span class="t" style="left:503.4px;top:61.1px;font-size:10.2px;line-height:10px;font-weight:700;color:#15467f;letter-spacing:-0.2px;transform-origin:100% 100%;transform:scaleX(.84);-webkit-text-stroke:.4px">TS</span>
<span class="t" style="left:526px;top:53.53px;line-height:20px;font-size:15.2px;color:#969696;font-style:italic;letter-spacing:-0.17px;">inject.ts</span>
<div class="abs" style="left:630px;top:42px;width:144px;height:42px;background:#2d2d2d;border-right:1px solid #252526"></div>
<div class="abs" style="left:645px;top:54.8px;width:16px;height:16px;background:#0c96e4"></div><span class="t" style="left:647.4px;top:61.1px;font-size:10.2px;line-height:10px;font-weight:700;color:#15467f;letter-spacing:-0.2px;transform-origin:100% 100%;transform:scaleX(.84);-webkit-text-stroke:.4px">TS</span>
<span class="t" style="left:669px;top:53.53px;line-height:20px;font-size:15.2px;color:#969696;letter-spacing:0.16px;">watcher.ts</span>
<div class="abs" style="left:774px;top:42px;width:220px;height:42px;background:#2d2d2d;border-right:1px solid #252526"></div>
<svg class="abs" style="left:789.5px;top:54.9px;" width="13.2" height="15.2" viewBox="0 0 16 16"><path d="M1 0h14l-1.3 14.4L8 16l-5.7-1.6z" fill="#e44d26"/><path d="M8 1.2v13.6l4.6-1.3L13.7 1.2z" fill="#f16529"/><path d="M4.3 3.6h7.5l-.2 1.9H6.3l.1 1.6h5l-.5 5L8 13l-2.9-.9-.2-2.2h1.8l.1 1 1.2.3 1.2-.3.2-2H4.7z" fill="#252526"/></svg>
<span class="t" style="left:813px;top:53.53px;line-height:20px;font-size:15.2px;color:#969696;letter-spacing:0.35px;">todomvc copy 2.html</span>
<div class="abs" style="left:994px;top:42px;width:148px;height:42px;background:#2d2d2d;border-right:1px solid #252526"></div>
<div class="abs" style="left:1007px;top:54.8px;width:16px;height:16px;background:#0c96e4"></div><span class="t" style="left:1009.4px;top:61.1px;font-size:10.2px;line-height:10px;font-weight:700;color:#15467f;letter-spacing:-0.2px;transform-origin:100% 100%;transform:scaleX(.84);-webkit-text-stroke:.4px">TS</span>
<span class="t" style="left:1032.5px;top:53.53px;line-height:20px;font-size:15.2px;color:#969696;letter-spacing:0.16px;">next-tick.ts</span>
<div class="abs" style="left:1142px;top:42px;width:141px;height:42px;background:#1e1e1e;"></div>
<div class="abs" style="left:1156px;top:54.8px;width:16px;height:16px;background:#0c96e4"></div><span class="t" style="left:1158.4px;top:61.1px;font-size:10.2px;line-height:10px;font-weight:700;color:#15467f;letter-spacing:-0.2px;transform-origin:100% 100%;transform:scaleX(.84);-webkit-text-stroke:.4px">TS</span>
<span class="t" style="left:1180px;top:53.53px;line-height:20px;font-size:15.2px;color:#ffffff;letter-spacing:0.22px;">init.ts</span>
<svg class="abs" style="left:1262px;top:57px;" width="12" height="12" viewBox="0 0 12 12"><path d="M1 1l10 10M11 1L1 11" stroke="#ffffff" stroke-width="1.5"/></svg>
<div id="crumbs" class="abs"></div>
<span class="t" style="left:362.5px;top:87.33px;line-height:20px;font-size:15.2px;color:#a9a9a9;letter-spacing:-0.25px;">src</span>
<svg class="abs" style="left:387px;top:91px;" width="9" height="13" viewBox="0 0 9 13"><path d="M2 1.4l5 5.1-5 5.1" fill="none" stroke="#a0a0a0" stroke-width="1.2"/></svg>
<span class="t" style="left:401px;top:87.33px;line-height:20px;font-size:15.2px;color:#a9a9a9;letter-spacing:0.11px;">core</span>
<svg class="abs" style="left:436px;top:91px;" width="9" height="13" viewBox="0 0 9 13"><path d="M2 1.4l5 5.1-5 5.1" fill="none" stroke="#a0a0a0" stroke-width="1.2"/></svg>
<span class="t" style="left:449.7px;top:87.33px;line-height:20px;font-size:15.2px;color:#a9a9a9;letter-spacing:0.03px;">instance</span>
<svg class="abs" style="left:511.5px;top:91px;" width="9" height="13" viewBox="0 0 9 13"><path d="M2 1.4l5 5.1-5 5.1" fill="none" stroke="#a0a0a0" stroke-width="1.2"/></svg>
<div class="abs" style="left:528px;top:89px;width:16px;height:16px;background:#0c96e4"></div><span class="t" style="left:530.4px;top:95.3px;font-size:10.2px;line-height:10px;font-weight:700;color:#15467f;letter-spacing:-0.2px;transform-origin:100% 100%;transform:scaleX(.84);-webkit-text-stroke:.4px">TS</span>
<span class="t" style="left:552px;top:87.33px;line-height:20px;font-size:15.2px;color:#a9a9a9;letter-spacing:0.22px;">init.ts</span>
<svg class="abs" style="left:595px;top:91px;" width="9" height="13" viewBox="0 0 9 13"><path d="M2 1.4l5 5.1-5 5.1" fill="none" stroke="#a0a0a0" stroke-width="1.2"/></svg>
<svg class="abs" style="left:608.6px;top:87.1px" width="18.4" height="17.6" viewBox="0 0 16 16" preserveAspectRatio="none"><path d="M8 1.3l6 2.9v7.4l-6 3.1-6-3.1V4.2z" fill="none" stroke="#b180d7" stroke-width="1.15" stroke-linejoin="round"/><path d="M2.2 4.4L8 7.3l5.8-2.9M8 7.3v7.2" fill="none" stroke="#b180d7" stroke-width="1.15" stroke-linejoin="round"/></svg>
<span class="t" style="left:632px;top:87.33px;line-height:20px;font-size:15.2px;color:#a9a9a9;letter-spacing:0.46px;">initMixin</span>
<svg class="abs" style="left:696px;top:91px;" width="9" height="13" viewBox="0 0 9 13"><path d="M2 1.4l5 5.1-5 5.1" fill="none" stroke="#a0a0a0" stroke-width="1.2"/></svg>
<svg class="abs" style="left:709.6px;top:87.1px" width="18.4" height="17.6" viewBox="0 0 16 16" preserveAspectRatio="none"><path d="M8 1.3l6 2.9v7.4l-6 3.1-6-3.1V4.2z" fill="none" stroke="#b180d7" stroke-width="1.15" stroke-linejoin="round"/><path d="M2.2 4.4L8 7.3l5.8-2.9M8 7.3v7.2" fill="none" stroke="#b180d7" stroke-width="1.15" stroke-linejoin="round"/></svg>
<span class="t" style="left:733px;top:87.33px;line-height:20px;font-size:15.2px;color:#a9a9a9;letter-spacing:-0.05px;">_init</span>
<div class="abs" style="left:343px;top:109.6px;width:993px;height:7px;background:linear-gradient(rgba(0,0,0,.7),rgba(0,0,0,.25) 45%,rgba(0,0,0,0));"></div>
<!-- part_over -->
<div class="abs" style="left:454.3px;top:582.2px;width:136.4px;height:26.8px;background:transparent;border:3.6px solid #ec1c24;border-radius:3px"></div>
<div class="abs" style="left:455.1px;top:626.4px;width:238.6px;height:29.4px;background:transparent;border:2.3px solid #ec1c24;border-radius:2px"></div>
<div class="abs" style="left:439.8px;top:822.8px;width:378.8px;height:87.2px;background:transparent;border:4px solid #ec1c24;border-radius:2px"></div>
<span class="t" style="left:418.5px;top:529.7px;font-family:'Noto Sans CJK SC','Liberation Sans',sans-serif;font-size:36px;line-height:43.2px;font-weight:900;color:#ec1c24;-webkit-text-stroke:4px #ffffff;paint-order:stroke fill;letter-spacing:-0.55px;transform-origin:0 0;transform:scale(1.08,1.03);filter:drop-shadow(0 0 1px rgba(0,0,0,.55));">劫持数据的位置</span>
<span class="t" style="left:734.5px;top:588.7px;font-family:'Noto Sans CJK SC','Liberation Sans',sans-serif;font-size:36px;line-height:43.2px;font-weight:900;color:#ec1c24;-webkit-text-stroke:4px #ffffff;paint-order:stroke fill;letter-spacing:-0.05px;transform-origin:0 0;transform:scale(1.08,1.03);filter:drop-shadow(0 0 1px rgba(0,0,0,.55));">执行代码的位置</span>
<span class="t" style="left:884.3px;top:835.2px;font-family:'Noto Sans CJK SC','Liberation Sans',sans-serif;font-size:36px;line-height:43.2px;font-weight:900;color:#ec1c24;-webkit-text-stroke:4px #ffffff;paint-order:stroke fill;letter-spacing:-0.07px;transform-origin:0 0;transform:scale(1.08,1.03);filter:drop-shadow(0 0 1px rgba(0,0,0,.55));">创建Watcher的位置</span>
<span class="t" style="left:842.6px;top:116.7px;font-family:'Noto Sans CJK SC','Liberation Sans',sans-serif;font-size:36px;line-height:43.2px;font-weight:900;color:#ec1c24;-webkit-text-stroke:4px #ffffff;paint-order:stroke fill;letter-spacing:0.1px;transform-origin:0 0;transform:scale(1.08,1.03);filter:drop-shadow(0 0 1px rgba(0,0,0,.55));"><span style="display:inline-block;transform:scaleX(1.3);transform-origin:0 0;letter-spacing:2.41px;margin-right:9.78px">//</span><span style="letter-spacing:-6.2px"> </span><span style="display:inline-block;transform:translateY(3.2px) scaleX(.82);transform-origin:0 0;margin-right:-6.6px">_</span>init方法</span>
</body></html>
